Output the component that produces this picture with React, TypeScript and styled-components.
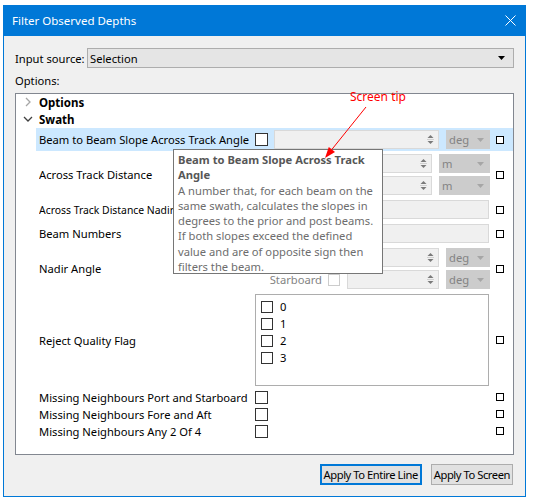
import React from "react";
import styled, { createGlobalStyle } from "styled-components";

const GlobalStyle = createGlobalStyle`
  html, body {
    margin: 0;
    padding: 0;
    background: #ffffff;
  }
  body {
    font-family: "Segoe UI", "Noto Sans", "Open Sans", sans-serif;
    font-size: 11.2px;
    color: #000000;
  }
  * {
    box-sizing: border-box;
  }
`;

const Window = styled.div`
  position: relative;
  margin: 5px 0 0 3px;
  width: 523px;
  height: 492px;
  border: 1px solid #0078d7;
  border-top: none;
  display: flex;
  flex-direction: column;
`;

const TitleBar = styled.div`
  height: 31px;
  flex: none;
  background: #0078d7;
  color: #ffffff;
  font-size: 11.5px;
  display: flex;
  align-items: center;
  justify-content: space-between;
  padding-left: 8px;
`;

const CloseButton = styled.div`
  width: 30px;
  height: 31px;
  display: flex;
  align-items: center;
  justify-content: center;
`;

const Body = styled.div`
  flex: 1;
  background: #f0f0f0;
  padding: 12px 11px 11px;
  display: flex;
  flex-direction: column;
  min-height: 0;
`;

const SourceRow = styled.div`
  display: flex;
  align-items: center;
  height: 20px;
`;

const SourceLabel = styled.div`
  width: 72px;
  white-space: nowrap;
`;

const Combo = styled.div`
  flex: 1;
  height: 20px;
  background: #e5e5e5;
  border: 1px solid #adadad;
  display: flex;
  align-items: center;
  justify-content: space-between;
  padding: 0 8px 0 2px;
`;

const OptionsLabel = styled.div`
  height: 25px;
  display: flex;
  align-items: center;
`;

const Tree = styled.div`
  position: relative;
  flex: 1;
  background: #ffffff;
  border: 1px solid #828790;
  display: flex;
  flex-direction: column;
  gap: 1px;
  overflow: hidden;
`;

const HeaderRow = styled.div`
  height: 16px;
  display: flex;
  align-items: center;
  font-weight: bold;
  font-size: 11.5px;
`;

const Chevron = styled.div`
  width: 23px;
  display: flex;
  justify-content: center;
  align-items: center;
`;

const PropRow = styled.div<{ $selected?: boolean; $compact?: boolean }>`
  display: flex;
  align-items: center;
  margin-left: 20px;
  padding: ${(p) => (p.$compact ? "0" : "2px")} 0 ${(p) => (p.$compact ? "0" : "2px")} 3px;
  height: ${(p) => (p.$compact ? "16px" : "auto")};
  background: ${(p) => (p.$selected ? "#cce8ff" : "transparent")};
`;

const PropLabel = styled.div<{ $small?: boolean }>`
  width: 216px;
  flex: none;
  white-space: nowrap;
  overflow: hidden;
  font-size: ${(p) => (p.$small ? "10.4px" : "11.2px")};
`;

const PropValue = styled.div`
  width: 235px;
  flex: none;
  display: flex;
  flex-direction: column;
  gap: 3px;
`;

const PropCheck = styled.div`
  flex: 1;
  padding-left: 6px;
  display: flex;
  align-items: center;
`;

const SmallBox = styled.div`
  width: 8px;
  height: 8px;
  border: 1px solid #000000;
  background: #ffffff;
`;

const ValueLine = styled.div`
  height: 19px;
  display: flex;
  align-items: center;
`;

const CheckBox = styled.div<{ $size?: number; $disabled?: boolean; $gap?: number }>`
  width: ${(p) => p.$size ?? 13}px;
  height: ${(p) => p.$size ?? 13}px;
  flex: none;
  border: 1px solid ${(p) => (p.$disabled ? "#cccccc" : "#333333")};
  background: #ffffff;
  margin-right: ${(p) => p.$gap ?? 0}px;
`;

const SpinBox = styled.div`
  flex: 1;
  height: 19px;
  background: #f0f0f0;
  border: 1px solid #d9d9d9;
  display: flex;
  align-items: center;
  justify-content: flex-end;
  padding-right: 4px;
`;

const TextBox = styled.div`
  width: 234px;
  height: 19px;
  background: #f0f0f0;
  border: 1px solid #d9d9d9;
`;

const Dropdown = styled.div<{ $width: number }>`
  width: ${(p) => p.$width}px;
  flex: none;
  height: 19px;
  margin-left: 7px;
  background: #cccccc;
  color: #838383;
  display: flex;
  align-items: center;
  justify-content: space-between;
  padding: 0 6px 0 3px;
`;

const SubLabel = styled.div`
  width: 73px;
  flex: none;
  text-align: right;
  padding-right: 6px;
  color: #838383;
`;

const ListBox = styled.div`
  width: 234px;
  height: 92px;
  background: #ffffff;
  border: 1px solid #adadad;
  padding: 3px 5px;
  display: flex;
  flex-direction: column;
`;

const ListItem = styled.div`
  height: 17px;
  display: flex;
  align-items: center;
  gap: 7px;
`;

const Tooltip = styled.div`
  position: absolute;
  left: 157px;
  top: 55px;
  width: 210px;
  height: 125px;
  background: #ffffff;
  border: 1px solid #767676;
  padding: 2px 4px;
  line-height: 15.3px;
  color: #6d6d6d;
  white-space: nowrap;
  z-index: 2;
`;

const TipTitle = styled.div`
  font-weight: bold;
  color: #575757;
`;

const ButtonBar = styled.div`
  margin-top: 9px;
  display: flex;
  justify-content: flex-end;
  gap: 9px;
  padding-right: 1px;
`;

const Button = styled.div<{ $focused?: boolean }>`
  height: 21px;
  display: flex;
  align-items: center;
  justify-content: center;
  padding: 0 2px;
  letter-spacing: -0.45px;
  background: #e1e1e1;
  border: ${(p) => (p.$focused ? "2px solid #0078d7" : "1px solid #adadad")};
  white-space: nowrap;
`;

const NoteText = styled.div`
  position: absolute;
  left: 346px;
  top: 84px;
  line-height: 15px;
  font-size: 12px;
  color: #ff0000;
  z-index: 3;
`;

const NoteArrow = styled.svg`
  position: absolute;
  left: 316px;
  top: 99px;
  z-index: 3;
`;

const DownArrow = ({ color }: { color: string }) => (
  <svg width="7" height="4" viewBox="0 0 7 4">
    <polygon points="0,0 7,0 3.5,4" fill={color} />
  </svg>
);

const Spinner = () => (
  <svg width="7" height="11" viewBox="0 0 7 11">
    <polygon points="0.5,4 3.5,1 6.5,4" fill="#7a7a7a" />
    <line x1="0" y1="5.5" x2="7" y2="5.5" stroke="#d0d0d0" strokeWidth="1" />
    <polygon points="0.5,7 3.5,10 6.5,7" fill="#7a7a7a" />
  </svg>
);

const Value = ({ children }: { children: React.ReactNode }) => (
  <PropValue>{children}</PropValue>
);

const Check = () => (
  <PropCheck>
    <SmallBox />
  </PropCheck>
);

const UnitLine = ({ unit, width, sub }: { unit: string; width: number; sub?: string }) => (
  <ValueLine>
    {sub && (
      <>
        <SubLabel>{sub}</SubLabel>
        <CheckBox $size={12} $disabled $gap={7} />
      </>
    )}
    <SpinBox>
      <Spinner />
    </SpinBox>
    <Dropdown $width={width}>
      {unit} <DownArrow color="#a6a6a6" />
    </Dropdown>
  </ValueLine>
);

export default function App() {
  return (
    <>
      <GlobalStyle />
      <Window>
        <TitleBar>
          <span>Filter Observed Depths</span>
          <CloseButton>
            <svg width="11" height="11" viewBox="0 0 11 11">
              <path d="M0.5 0.5 L10.5 10.5 M10.5 0.5 L0.5 10.5" stroke="#ffffff" strokeWidth="1" />
            </svg>
          </CloseButton>
        </TitleBar>
        <Body>
          <SourceRow>
            <SourceLabel>Input source:</SourceLabel>
            <Combo>
              <span>Selection</span>
              <DownArrow color="#000000" />
            </Combo>
          </SourceRow>
          <OptionsLabel>Options:</OptionsLabel>
          <Tree>
            <HeaderRow>
              <Chevron>
                <svg width="6" height="10" viewBox="0 0 6 10">
                  <polyline points="1,1 5,5 1,9" fill="none" stroke="#a6a6a6" strokeWidth="1.3" />
                </svg>
              </Chevron>
              Options
            </HeaderRow>
            <HeaderRow>
              <Chevron>
                <svg width="10" height="6" viewBox="0 0 10 6">
                  <polyline points="1,1 5,5 9,1" fill="none" stroke="#404040" strokeWidth="1.3" />
                </svg>
              </Chevron>
              Swath
            </HeaderRow>

            <PropRow $selected>
              <PropLabel>Beam to Beam Slope Across Track Angle</PropLabel>
              <Value>
                <ValueLine>
                  <CheckBox $gap={6} />
                  <SpinBox>
                    <Spinner />
                  </SpinBox>
                  <Dropdown $width={44}>
                    deg <DownArrow color="#a6a6a6" />
                  </Dropdown>
                </ValueLine>
              </Value>
              <Check />
            </PropRow>

            <PropRow>
              <PropLabel>Across Track Distance</PropLabel>
              <Value>
                <UnitLine unit="m" width={51} />
                <UnitLine unit="m" width={51} />
              </Value>
              <Check />
            </PropRow>

            <PropRow>
              <PropLabel $small>Across Track Distance Nadir</PropLabel>
              <Value>
                <ValueLine>
                  <TextBox />
                </ValueLine>
              </Value>
              <Check />
            </PropRow>

            <PropRow>
              <PropLabel>Beam Numbers</PropLabel>
              <Value>
                <ValueLine>
                  <TextBox />
                </ValueLine>
              </Value>
              <Check />
            </PropRow>

            <PropRow>
              <PropLabel>Nadir Angle</PropLabel>
              <Value>
                <UnitLine unit="deg" width={44} sub="Port" />
                <UnitLine unit="deg" width={44} sub="Starboard" />
              </Value>
              <Check />
            </PropRow>

            <PropRow>
              <PropLabel>Reject Quality Flag</PropLabel>
              <Value>
                <ListBox>
                  {["0", "1", "2", "3"].map((flag) => (
                    <ListItem key={flag}>
                      <CheckBox $size={12} />
                      {flag}
                    </ListItem>
                  ))}
                </ListBox>
              </Value>
              <Check />
            </PropRow>

            {[
              "Missing Neighbours Port and Starboard",
              "Missing Neighbours Fore and Aft",
              "Missing Neighbours Any 2 Of 4",
            ].map((name) => (
              <PropRow key={name} $compact>
                <PropLabel>{name}</PropLabel>
                <Value>
                  <CheckBox />
                </Value>
                <Check />
              </PropRow>
            ))}

            <Tooltip>
              <TipTitle>
                Beam to Beam Slope Across Track
                <br />
                Angle
              </TipTitle>
              A number that, for each beam on the
              <br />
              same swath, calculates the slopes in
              <br />
              degrees to the prior and post beams.
              <br />
              If both slopes exceed the defined
              <br />
              value and are of opposite sign then
              <br />
              filters the beam.
            </Tooltip>
          </Tree>
          <ButtonBar>
            <Button $focused>Apply To Entire Line</Button>
            <Button>Apply To Screen</Button>
          </ButtonBar>
        </Body>

        <NoteText>Screen tip</NoteText>
        <NoteArrow width="52" height="58" viewBox="0 0 52 58">
          <line x1="46" y1="3" x2="11.9" y2="45.4" stroke="#ff0000" strokeWidth="1" />
          <polygon points="5,54 15,47.9 8.8,42.9" fill="#ff0000" />
        </NoteArrow>
      </Window>
    </>
  );
}
